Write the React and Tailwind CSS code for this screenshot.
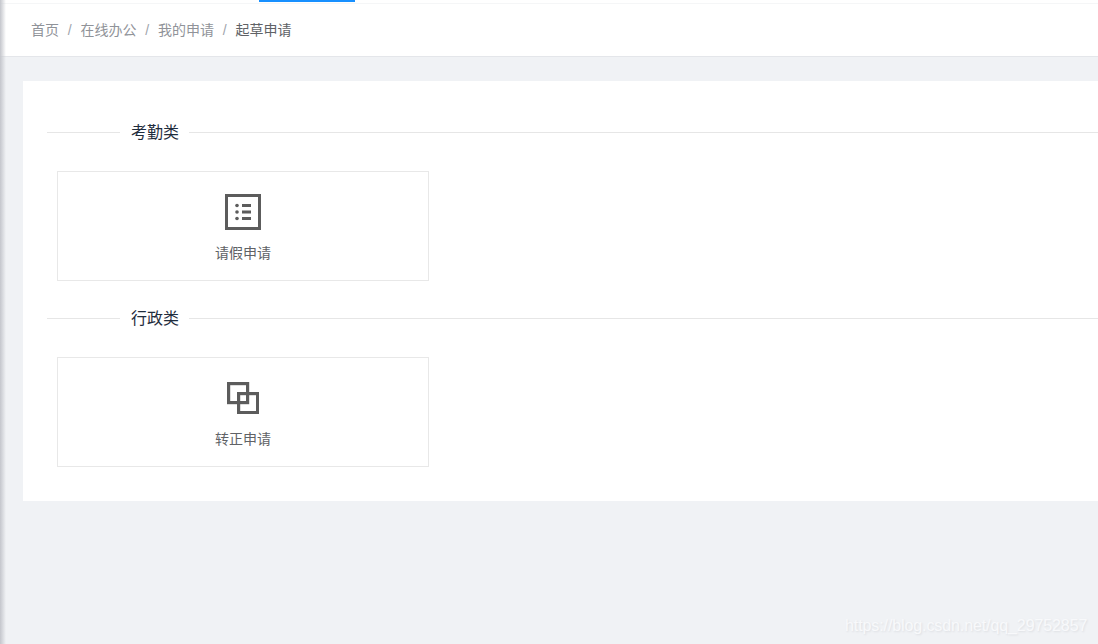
const font = { fontFamily: '"Liberation Sans","Noto Sans CJK SC",sans-serif' };

function ListIcon() {
  return (
    <svg width="36" height="36" viewBox="0 0 36 36" fill="none">
      <rect x="1.5" y="1.5" width="33" height="33" stroke="#5c5c5c" strokeWidth="3" />
      <circle cx="12" cy="11.5" r="1.8" fill="#5c5c5c" />
      <circle cx="12" cy="18" r="1.8" fill="#5c5c5c" />
      <circle cx="12" cy="24.5" r="1.8" fill="#5c5c5c" />
      <rect x="17" y="10" width="9" height="3" fill="#5c5c5c" />
      <rect x="17" y="16.5" width="9" height="3" fill="#5c5c5c" />
      <rect x="17" y="23" width="9" height="3" fill="#5c5c5c" />
    </svg>
  );
}

function CopyIcon() {
  return (
    <svg width="32" height="32" viewBox="0 0 32 32" fill="none">
      <rect x="1.6" y="1.6" width="19" height="19" stroke="#5c5c5c" strokeWidth="3.2" />
      <rect x="11.6" y="11.6" width="19" height="19" stroke="#5c5c5c" strokeWidth="3.2" />
    </svg>
  );
}

function Section({ title, label, icon }) {
  return (
    <section>
      <div className="flex items-center h-[24px] pl-6">
        <div className="w-[73px] h-px bg-[#e6e6e6]" />
        <span className="pl-[11px] pr-[10px] pt-[2px] text-[16px] leading-[24px] text-[#1f2d3d]">{title}</span>
        <div className="flex-1 h-px bg-[#e6e6e6]" />
      </div>
      <div className="mt-[27px] ml-[34px] w-[372px] h-[110px] bg-white border border-[#e8e8e8] flex flex-col items-center">
        <div className="h-[36px] mt-[22px] flex items-center justify-center">{icon}</div>
        <div className="mt-[13px] text-[14px] leading-[20px] text-[#606266]">{label}</div>
      </div>
    </section>
  );
}

function Sep() {
  return <span className="w-[21.5px] text-center text-[#a0a4ab]">/</span>;
}

export default function App() {
  return (
    <div className="relative w-[1098px] h-[644px] overflow-hidden bg-[#f0f2f5] text-[14px]" style={font}>
      <header className="bg-white h-[57px] border-b border-[#e4e6ea]">
        <div className="h-[4px] border-b border-[#f5f6f7] pl-[259px]">
          <div className="w-[96px] h-[2px] bg-[#1890ff]" />
        </div>
        <nav className="flex items-center h-[52px] pl-[31px] text-[14px]">
          <span className="text-[#909399]">首页</span>
          <Sep />
          <span className="text-[#909399]">在线办公</span>
          <Sep />
          <span className="text-[#909399]">我的申请</span>
          <Sep />
          <span className="text-[#606266]">起草申请</span>
        </nav>
      </header>
      <main className="ml-[23px] mt-[24px] h-[420px] bg-white pt-[39px] flex flex-col gap-[25px]">
        <Section title="考勤类" label="请假申请" icon={<ListIcon />} />
        <Section title="行政类" label="转正申请" icon={<CopyIcon />} />
      </main>
      <div className="absolute left-0 top-0 bottom-0 w-[6px] bg-gradient-to-r from-[#c4c6cc] to-transparent" />
      <div className="absolute left-[845px] bottom-[8px] whitespace-nowrap text-[16px] tracking-[-0.1px] leading-[20px] text-[#f8f9fb] [text-shadow:1px_1px_2px_#dcdee2]">
        https://blog.csdn.net/qq_29752857
      </div>
    </div>
  );
}
